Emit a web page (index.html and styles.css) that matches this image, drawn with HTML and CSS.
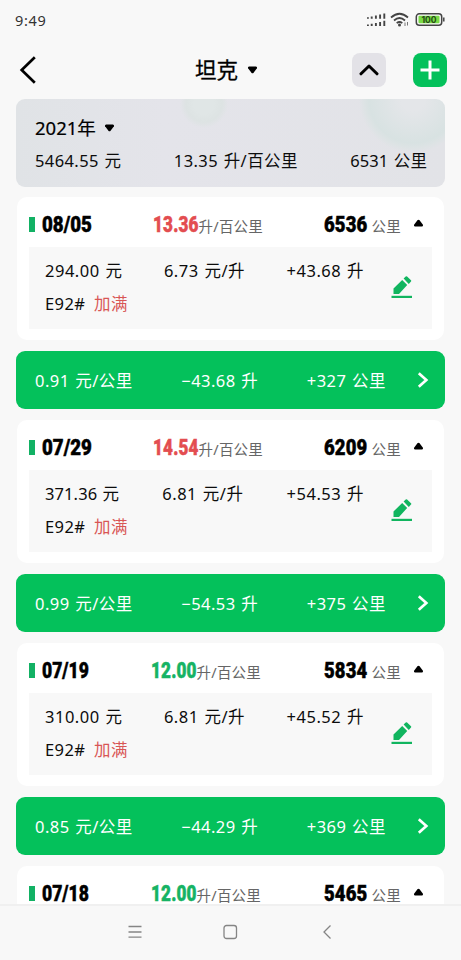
FILE: index.html
```html
<!DOCTYPE html>
<html lang="zh-CN">
<head>
<meta charset="utf-8">
<title>坦克</title>
<link rel="stylesheet" href="styles.css">
</head>
<body>
<svg class="defs" width="0" height="0">
  <symbol id="pen" viewBox="0 0 22 24"><path d="M2.500 13.500v5.500h5.500L16.200 9.900l-5-5z M12.600 3.500l2.100-2q.7-.6 1.400 0l3.900 3.700q.6.700 0 1.400l-2.200 2.300z"/><path d="M.5 20.800h20.500v2.200H.5z"/></symbol>
  <symbol id="go" viewBox="0 0 12 16"><path d="M1.800 1.300 9.300 8 1.800 14.700" fill="none" stroke="#fff" stroke-width="2.700"/></symbol>
  <symbol id="tri" viewBox="0 0 11 8"><path d="M2 .5h7q1.500.4.900 1.800L6.600 6.700q-1.100 1-2.200 0L1.100 2.300Q.5.900 2 .5z"/></symbol>
</svg>
<div class="status">
  <span class="clock">9:49</span>
  <svg width="80" height="16" viewBox="0 0 80 16">
    <g stroke="#444" stroke-width="1.900"><path d="M.9 6.700V5.200M4.700 6.700V4.500M8.900 6.700V3.500M13.100 6.700V2.500M17.300 6.700V1.500M.9 14V12.500M4.700 14V11.800M8.900 14V11M13.100 14V10M17.300 14V8.800"/></g>
    <g fill="none" stroke="#444" stroke-width="1.700"><path d="M24 5.500Q32.500-2 41 5.500M27 8.500Q32.500 3.500 38 8.500M29.700 11.200Q32.500 8.800 35.300 11.200"/></g>
    <circle cx="32.500" cy="13" r="1.500" fill="#444"/><path d="M38 10.500v3.500M40.500 10v3.500" stroke="#777"/>
    <rect x="49.300" y="1.800" width="25.400" height="11.400" rx="3" fill="none" stroke="#444" stroke-width="1.500"/>
    <rect x="51.500" y="3.800" width="21" height="7.400" rx="1" fill="#7bdc46"/>
    <path d="M76.800 5.500v4" stroke="#444" stroke-width="1.500"/>
    <text x="62" y="10.800" text-anchor="middle" class="batt">100</text>
  </svg>
</div>
<header class="top">
  <svg class="back" width="18" height="28" viewBox="0 0 18 28"><path d="M15.800 1.300 2.700 14 15.800 26.700" fill="none" stroke="#000" stroke-width="2.700"/></svg>
  <h1 class="title">坦克 <svg width="11" height="8"><use href="#tri"/></svg></h1>
  <span class="btn grey"><svg width="20" height="12" viewBox="0 0 20 12"><path d="M2 9.800 10 2l8 7.800" fill="none" stroke="#000" stroke-width="3" stroke-linecap="round" stroke-linejoin="round"/></svg></span>
  <span class="btn green"><svg width="20" height="20" viewBox="0 0 20 20"><path d="M10 .5v19M.5 10h19" stroke="#fff" stroke-width="3"/></svg></span>
</header>
<section class="year">
  <div class="year-name">2021年 <svg width="11" height="8"><use href="#tri"/></svg></div>
  <div class="row"><span>5464.55 元</span><span>13.35 升/百公里</span><span class="tight">6531 公里</span></div>
</section>
<main class="list">
  <article class="card">
    <div class="head"><i class="bar"></i><div class="row"><b class="date"><span>08/05</span></b><span class="unit"><b class="num red"><span>13.36</span></b>升/百公里</span><span class="unit km"><b class="num"><span>6536</span></b>公里</span></div><svg class="up" width="11" height="8"><use href="#tri"/></svg></div>
    <div class="detail"><div class="row"><span>294.00 元</span><span>6.73 元/升</span><span>+43.68 升</span></div><div class="fuel">E92# <em>加满</em></div><svg class="pen"><use href="#pen"/></svg></div>
  </article>
  <div class="trip"><div class="row"><span>0.91 元/公里</span><span>−43.68 升</span><span>+327 公里</span></div><svg width="12" height="16"><use href="#go"/></svg></div>
  <article class="card">
    <div class="head"><i class="bar"></i><div class="row"><b class="date"><span>07/29</span></b><span class="unit"><b class="num red"><span>14.54</span></b>升/百公里</span><span class="unit km"><b class="num"><span>6209</span></b>公里</span></div><svg class="up" width="11" height="8"><use href="#tri"/></svg></div>
    <div class="detail"><div class="row"><span class="tight">371.36 元</span><span>6.81 元/升</span><span>+54.53 升</span></div><div class="fuel">E92# <em>加满</em></div><svg class="pen"><use href="#pen"/></svg></div>
  </article>
  <div class="trip"><div class="row"><span>0.99 元/公里</span><span>−54.53 升</span><span>+375 公里</span></div><svg width="12" height="16"><use href="#go"/></svg></div>
  <article class="card">
    <div class="head"><i class="bar"></i><div class="row"><b class="date short"><span>07/19</span></b><span class="unit"><b class="num lime"><span>12.00</span></b>升/百公里</span><span class="unit km"><b class="num"><span>5834</span></b>公里</span></div><svg class="up" width="11" height="8"><use href="#tri"/></svg></div>
    <div class="detail"><div class="row"><span>310.00 元</span><span>6.81 元/升</span><span>+45.52 升</span></div><div class="fuel">E92# <em>加满</em></div><svg class="pen"><use href="#pen"/></svg></div>
  </article>
  <div class="trip"><div class="row"><span>0.85 元/公里</span><span>−44.29 升</span><span>+369 公里</span></div><svg width="12" height="16"><use href="#go"/></svg></div>
  <article class="card">
    <div class="head"><i class="bar"></i><div class="row"><b class="date short"><span>07/18</span></b><span class="unit"><b class="num lime"><span>12.00</span></b>升/百公里</span><span class="unit km"><b class="num"><span>5465</span></b>公里</span></div><svg class="up" width="11" height="8"><use href="#tri"/></svg></div>
  </article>
</main>
<nav class="nav">
  <svg width="16" height="16" viewBox="0 0 16 16"><path d="M1.500 2.500h13M1.500 8h13M1.500 13.200h13"/></svg>
  <svg width="16" height="16" viewBox="0 0 16 16"><rect x="2" y="1.500" width="12.500" height="13" rx="2.500"/></svg>
  <svg width="16" height="16" viewBox="0 0 16 16"><path d="M11.500 1.500 5 8l6.500 6.500"/></svg>
</nav>
</body>
</html>
```
FILE: styles.css
```css
* { box-sizing: border-box; }
body {
  margin: 0;
  width: 461px;
  height: 960px;
  overflow: hidden;
  display: flex;
  flex-direction: column;
  background: #f8f8f8;
  color: #0c0c0c;
  font: 16.500px/24px "Noto Sans", "Noto Sans CJK SC", sans-serif;
}
svg { flex: none; }
.defs { position: absolute; }
.status { height: 40px; padding: 0 14px 0 15px; display: flex; align-items: center; justify-content: space-between; }
.clock { font-size: 14.500px; color: #333; letter-spacing: .7px; }
.batt { font: 700 8.500px Inter, sans-serif; fill: #234a15; }
.top { height: 59px; padding: 0 14px 0 19px; display: flex; align-items: center; }
.back { margin-top: 1px; }
.title { flex: 1; margin: 0 0 0 158px; font-size: 21.500px; font-weight: 400; -webkit-text-stroke: .3px; line-height: 32px; color: #000; display: flex; align-items: center; gap: 9px; }
.btn { width: 34px; height: 34px; border-radius: 8px; display: grid; place-items: center; }
.btn.grey { background: #e3e2e7; margin-right: 27px; }
.btn.green { background: #04c15b; }
.row { flex: 1; display: flex; justify-content: space-between; white-space: nowrap; }
.year {
  flex: none;
  margin: 0 16px;
  height: 88px;
  border-radius: 9px;
  padding: 17px 18px 0 19px;
  background:
    radial-gradient(circle at 188px 5px, #e0e6e6 0 10px, #dde3e3 18px, transparent 24px),
    radial-gradient(circle at 397px 0, #e4e6e9 0 12px, #d8e2e2 44px, #dce3e4 48px, transparent 54px),
    linear-gradient(90deg, #e0e3e6, #e4e4ea 35%, #e2e3e7);
}
.year .row { margin-top: 9px; letter-spacing: .4px; word-spacing: 1px; }
.year-name { display: flex; align-items: center; gap: 8px; font-size: 18.500px; font-weight: 400; -webkit-text-stroke: .2px; color: #000; }
.list { flex: 1; min-height: 0; overflow: hidden; padding: 10px 16px 0; display: flex; flex-direction: column; gap: 11px; }
.card { flex: none; height: 143px; margin: 0 1px; padding: 12px 12px 0; background: #fff; border-radius: 10px; }
.head { display: flex; align-items: center; height: 30px; }
.bar { width: 5.500px; height: 15px; background: #12b164; margin-right: 7.500px; }
.head .row { align-items: baseline; padding-top: 1px; }
.date, .num { font: 900 22.500px/16px Roboto, sans-serif; color: #000; display: inline-block; width: 50px; white-space: nowrap; -webkit-text-stroke: .5px; }
.date.short { width: 46px; }
.date span { display: inline-block; transform: scaleX(.83); transform-origin: left; }
.date.short span { transform: scaleX(.78); }
.num { width: 46px; }
.num span { display: inline-block; transform: scaleX(.76); transform-origin: left; }
.unit { font-size: 14.500px; line-height: 16px; color: #666; letter-spacing: .2px; }
.km .num { width: 48px; }
.km .num span { transform: scaleX(.82); }
.num.red { color: #e34d50; }
.num.lime { color: #16b364; }
.up { margin: -2px 8px 0 12px; transform: rotate(180deg); }
.detail { position: relative; height: 82px; margin-top: 8px; padding: 12px 68px 0 16px; background: #f8f8f8; letter-spacing: .5px; word-spacing: 1px; }
.tight { letter-spacing: .1px; }
.fuel { margin-top: 9px; letter-spacing: .4px; word-spacing: 4px; }
.fuel em { font-style: normal; color: #d85655; }
.pen { position: absolute; right: 19px; top: 28px; width: 22px; height: 24px; fill: #11b55f; }
.trip { flex: none; height: 58px; padding: 2px 16px 0 19px; display: flex; align-items: center; background: #04c15b; border-radius: 9px; color: #fff; letter-spacing: .45px; word-spacing: 1px; }
.trip .row { margin-right: 31px; }
.trip svg { margin-top: -2px; }
.nav { flex: none; height: 56px; border-top: 2px solid #f0f0f0; padding: 0 126px 2px 127px; display: flex; align-items: center; justify-content: space-between; }
.nav svg { fill: none; stroke: #858585; stroke-width: 1.300; }
.nav svg:nth-child(2) { margin-right: 3px; }
```
